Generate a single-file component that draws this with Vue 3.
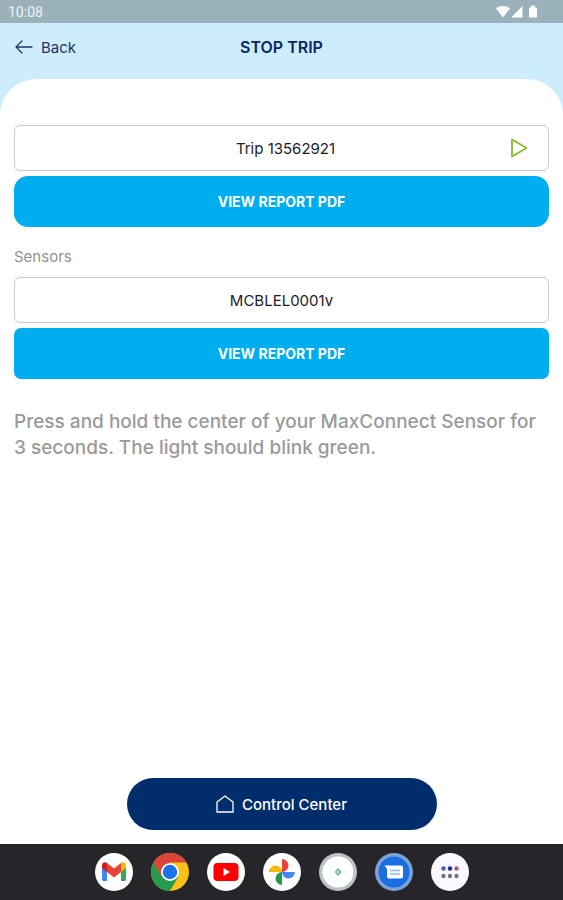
<script setup>

// StopTrip

import { ref } from 'vue'

// Component state
const trip = ref({ id: 1, label: 'Trip 13562921' })
const sensors = ref([
   { id: 1, label: 'MCBLEL0001v' }
])
</script>


<template>
   <div class="screen">
      <div class="status_bar">
         <span>10:08</span>
         <svg class="status_icons" width="44" height="14" viewBox="0 0 44 14" fill="#fff" aria-hidden="true">
            <path d="M1 3.400C5 .3 11 .3 15 3.400L8 12.500z" />
            <path d="M27.500 1v11.500H16z" />
            <path d="M34 2.500h2V.5h4v2h2v10h-8z" />
         </svg>
      </div>

      <header class="top_bar">
         <button class="back" type="button">
            <svg width="18" height="14" viewBox="0 0 18 14" fill="none" stroke="currentColor" stroke-width="1.300" stroke-linecap="round" stroke-linejoin="round" aria-hidden="true">
               <path d="M17 7H1M7 1L1 7l6 6" />
            </svg>
            Back
         </button>
         <h1>STOP TRIP</h1>
      </header>

      <main class="sheet">
         <section class="group">
            <button class="item item_playable" type="button">
               {{ trip.label }}
               <svg class="play" width="18" height="20" viewBox="0 0 18 20" fill="none" stroke="#84bd2b" stroke-width="1.800" stroke-linejoin="round" aria-hidden="true">
                  <path d="M2 1.500v17L16.500 10z" />
               </svg>
            </button>
            <button class="report report_round" type="button">VIEW REPORT PDF</button>
         </section>

         <h2>Sensors</h2>
         <section v-for="sensor in sensors" :key="sensor.id" class="group">
            <button class="item" type="button">{{ sensor.label }}</button>
            <button class="report" type="button">VIEW REPORT PDF</button>
         </section>

         <p class="hint">Press and hold the center of your MaxConnect Sensor for 3 seconds. The light should blink green.</p>

         <button class="control_center" type="button">
            <svg width="18" height="18" viewBox="0 0 18 18" fill="none" stroke="currentColor" stroke-width="1.300" stroke-linejoin="round" aria-hidden="true">
               <path d="M1 7L9 1l8 6v10H1z" />
            </svg>
            Control Center
         </button>
      </main>

      <nav class="dock">
         <button type="button" aria-label="Gmail">
            <svg viewBox="0 0 38 38">
               <circle cx="19" cy="19" r="19" fill="#fff" />
               <path d="M7 13v13.500q0 1.500 1.500 1.500H12V16z" fill="#4285f4" />
               <path d="M26 16v12h3.500q1.500 0 1.500-1.500V13z" fill="#34a853" />
               <path d="M26 12.500V19l5-4v-2.500c0-3-3-4-5-2.500z" fill="#fbbc04" />
               <path d="M7 12.500V15l5 4v-9c-2-1.500-5-.5-5 2.500z" fill="#c5221f" />
               <path d="M12 10v9l7 5.500 7-5.500v-9l-7 5.500z" fill="#ea4335" />
            </svg>
         </button>
         <button type="button" aria-label="Chrome">
            <svg viewBox="0 0 38 38">
               <circle cx="19" cy="19" r="19" fill="#fbc116" />
               <path d="M2.550 9.500A19 19 0 0 0 19 38L27.200 23.700 19 19 10.800 23.700z" fill="#259b4b" />
               <path d="M2.550 9.500A19 19 0 0 1 35.450 9.500H19L10.800 23.700z" fill="#db4437" />
               <circle cx="19" cy="19" r="9" fill="#fff" />
               <circle cx="19" cy="19" r="7.200" fill="#1a73e8" />
            </svg>
         </button>
         <button type="button" aria-label="YouTube">
            <svg viewBox="0 0 38 38">
               <circle cx="19" cy="19" r="19" fill="#fff" />
               <rect x="6.500" y="10" width="25" height="18" rx="4" fill="#f00" />
               <path d="M16.500 15v8l6.500-4z" fill="#fff" />
            </svg>
         </button>
         <button type="button" aria-label="Photos">
            <svg viewBox="0 0 38 38">
               <circle cx="19" cy="19" r="19" fill="#fff" />
               <path d="M19 19V6a6.500 6.500 0 0 1 0 13z" fill="#ea4335" />
               <path d="M19 19h13a6.500 6.500 0 0 1-13 0z" fill="#4285f4" />
               <path d="M19 19v13a6.500 6.500 0 0 1 0-13z" fill="#1e9b4c" />
               <path d="M19 19H6a6.500 6.500 0 0 1 13 0z" fill="#fbb606" />
            </svg>
         </button>
         <button type="button" aria-label="MaxConnect">
            <svg viewBox="0 0 38 38">
               <circle cx="19" cy="19" r="19" fill="#bcc3c8" />
               <circle cx="19" cy="19" r="15.500" fill="#fff" />
               <path d="M19 15l3.500 4L19 23z" fill="#4dabe0" />
               <path d="M19 15l-3.500 4L19 23z" fill="#72c48b" />
               <path d="M19 17.500l1.300 1.500L19 20.500 17.700 19z" fill="#fff" />
            </svg>
         </button>
         <button type="button" aria-label="Messages">
            <svg viewBox="0 0 38 38">
               <circle cx="19" cy="19" r="19" fill="#7ba3d6" />
               <circle cx="19" cy="19" r="15.500" fill="#1a6fe0" />
               <path d="M9.500 12.500H26a2 2 0 0 1 2 2v9a2 2 0 0 1-2 2H14a2 2 0 0 1-2-2V16z" fill="#fff" />
               <path d="M15 17.500h10M15 21h10" stroke="#8db8ee" stroke-width="1.500" />
            </svg>
         </button>
         <button type="button" aria-label="All apps">
            <svg viewBox="0 0 38 38">
               <circle cx="19" cy="19" r="19" fill="#fbf8ff" />
               <circle cx="12.500" cy="15.500" r="2.200" fill="#4b5db0" />
               <circle cx="19" cy="15.500" r="2.200" fill="#1d2c91" />
               <circle cx="25.500" cy="15.500" r="2.200" fill="#a06078" />
               <circle cx="12.500" cy="23" r="2.200" fill="#77757e" />
               <circle cx="19" cy="23" r="2.200" fill="#77757e" />
               <circle cx="25.500" cy="23" r="2.200" fill="#77757e" />
            </svg>
         </button>
      </nav>
   </div>
</template>


<style>
body {
   margin:0;
}
</style>

<style scoped>
.screen {
   display:flex;
   flex-direction:column;
   min-height:100vh;
   background:#cdecfc;
   font-family:Inter, "Liberation Sans", sans-serif;
   color:#1d3468;
}
button {
   margin:0;
   padding:0;
   border:0;
   background:none;
   font:inherit;
   color:inherit;
   cursor:pointer;
}
.status_bar {
   display:flex;
   align-items:center;
   justify-content:space-between;
   height:23px;
   padding:0 24px 0 8px;
   background:#9ab0bb;
   color:#f0f4f6;
   font-family:Roboto, sans-serif;
   font-size:14px;
}
.top_bar {
   display:grid;
   grid-template-columns:1fr auto 1fr;
   align-items:center;
   box-sizing:border-box;
   height:56px;
   padding:0 15px 8px;
}
.back {
   display:flex;
   align-items:center;
   justify-self:start;
   gap:8px;
   font-size:15px;
}
h1 {
   margin:0;
   font-size:16px;
   font-weight:600;
   color:#0b2566;
}
.sheet {
   flex:1;
   display:flex;
   flex-direction:column;
   padding:46px 14px 14px;
   border-radius:36px 36px 0 0;
   background:#fff;
}
.group {
   display:flex;
   flex-direction:column;
   gap:5px;
}
.item {
   position:relative;
   height:46px;
   border:1px solid #cbc9cb;
   border-radius:6px;
   font-size:15px;
   color:#1c1c28;
}
.item_playable {
   padding-left:8px;
}
.play {
   position:absolute;
   top:12px;
   right:20px;
}
.report {
   height:51px;
   border-radius:7px;
   background:#00adef;
   color:#fff;
   font-size:14px;
   font-weight:700;
}
.report_round {
   border-radius:14px;
}
h2 {
   margin:20px 0 10px;
   font-size:15px;
   line-height:20px;
   font-weight:400;
   color:#929292;
}
.hint {
   margin:30px 0 24px;
   font-size:19px;
   line-height:26px;
   font-weight:500;
   color:#9a9a9a;
}
.control_center {
   display:flex;
   align-items:center;
   justify-content:center;
   gap:8px;
   width:55%;
   min-width:310px;
   height:52px;
   margin:auto auto 0;
   border-radius:26px;
   background:#002e6c;
   color:#fff;
   font-size:15px;
   font-weight:500;
}
.dock {
   display:flex;
   align-items:center;
   justify-content:center;
   gap:18px;
   height:56px;
   background:#25252a;
}
.dock button, .dock svg {
   display:block;
   width:38px;
   height:38px;
}
</style>
